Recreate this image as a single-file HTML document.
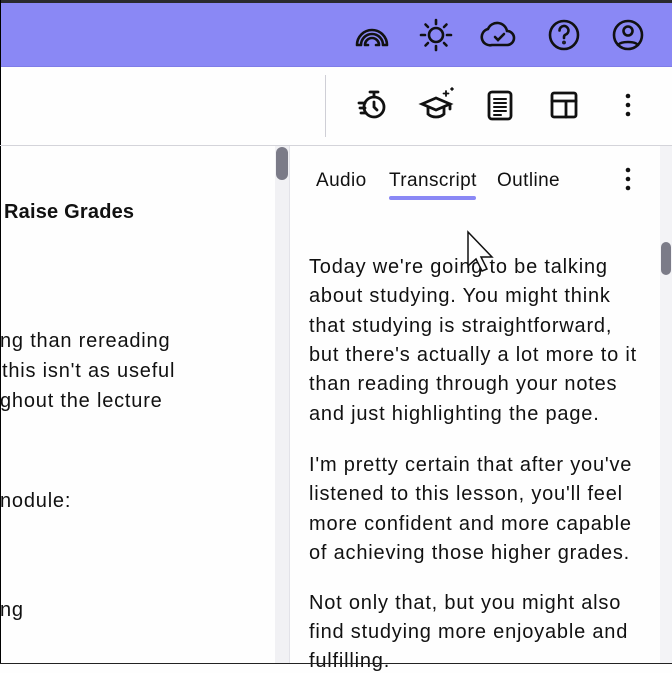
<!DOCTYPE html>
<html><head><style>
*{margin:0;padding:0;box-sizing:border-box}
body{width:672px;height:664px;overflow:hidden;background:#fefefe;position:relative;font-family:"Liberation Sans",sans-serif;color:#111}
.a{position:absolute}
.t{position:absolute;white-space:nowrap;font-size:20px;line-height:24px;letter-spacing:0.8px}
svg{position:absolute;overflow:visible}
</style></head><body>
<div class="a" style="left:0;top:0;width:672px;height:3px;background:#2a2a2e"></div>
<div class="a" style="left:0;top:3px;width:672px;height:64px;background:#8a88f5"></div>
<div class="a" style="left:0;top:66px;width:672px;height:1px;background:#7f7de8"></div>
<div class="a" style="left:0;top:0;width:1px;height:664px;background:#000"></div>
<div class="a" style="left:325px;top:75px;width:1px;height:62px;background:#cfcfd6"></div>
<div class="a" style="left:0;top:145px;width:672px;height:1px;background:#d4d4da"></div>
<div class="a" style="left:275px;top:146px;width:14px;height:517px;background:#f1f1f4"></div>
<div class="a" style="left:276px;top:147px;width:12px;height:33px;border-radius:6px;background:#7b7b88"></div>
<div class="a" style="left:289px;top:146px;width:1px;height:517px;background:#e2e2e8"></div>
<div class="a" style="left:660px;top:146px;width:12px;height:517px;background:#f3f3f6"></div>
<div class="a" style="left:661px;top:242px;width:10px;height:33px;border-radius:5px;background:#7b7b88"></div>

<svg width="672" height="70" style="left:0;top:0" fill="none" stroke="#111" stroke-width="2.6" stroke-linecap="round">
<path d="M357 45a15 15 0 0 1 30 0M361 45a11 11 0 0 1 22 0M365 45a7 7 0 0 1 14 0M357 45h4M383 45h4M365 45h3M376 45h3"/>
<circle cx="436" cy="35" r="7"/>
<path d="M436 20v4M436 46v4M421 35h4M447 35h4M425.5 24.5l2.5 2.5M444 43l2.5 2.5M446.5 24.5l-2.5 2.5M428 43l-2.5 2.5"/>
<path d="M492 45h15a7 7 0 0 0 0-14 10 10 0 0 0-19-2 8 8 0 0 0 4 16z"/>
<path d="M495 37l3 3 6-6"/>
<circle cx="564" cy="35" r="14"/>
<path d="M559.5 30.5a4.5 4.5 0 1 1 6 4.2c-1 .5-1.5 1.3-1.5 2.3v1"/>
<circle cx="564" cy="42.5" r=".6" fill="#111"/>
<circle cx="628" cy="35" r="14"/>
<circle cx="628" cy="31" r="4.5"/>
<path d="M618 45c3-4 17-4 20 0"/>
</svg>
<svg width="672" height="150" style="left:0;top:0" fill="none" stroke="#111" stroke-width="2.8" stroke-linecap="round">
<circle cx="374" cy="107" r="10"/>
<path d="M370 92h8M374 92v5M374 102v5l3 3M359 103h6M360 108h5M361 113h5"/>
<path d="M422 104l14-6 14 6-14 6z"/>
<path d="M428 107v7c4 4 12 4 16 0v-7M450 104v5"/>
<path d="M446 91v5M443.5 93.5h5M452 88v2M451 89h2" stroke-width="1.8"/>
<rect x="489" y="92" width="22" height="27" rx="3"/>
<path d="M494 99h12M494 103h12M494 107h12M494 111h12M494 115h7" stroke-width="2"/>
<rect x="552" y="93" width="24" height="24" rx="2"/>
<path d="M552 101h24M566 101v16"/>
</svg>
<svg width="672" height="300" style="left:0;top:0">
<circle cx="628" cy="96" r="2.3" fill="#111"/><circle cx="628" cy="105" r="2.3" fill="#111"/><circle cx="628" cy="114" r="2.3" fill="#111"/>
<circle cx="628" cy="170" r="2.3" fill="#111"/><circle cx="628" cy="179" r="2.3" fill="#111"/><circle cx="628" cy="188" r="2.3" fill="#111"/>
</svg>

<div class="t" style="left:316px;top:169px;font-size:19px;letter-spacing:0.4px">Audio</div>
<div class="t" style="left:389px;top:169px;font-size:19px;letter-spacing:0.4px">Transcript</div>
<div class="t" style="left:497px;top:169px;font-size:19px;letter-spacing:0.4px">Outline</div>
<div class="a" style="left:389px;top:196px;width:87px;height:4px;border-radius:2px;background:#8a88f5"></div>

<div class="t" style="left:4px;top:200px;font-weight:bold;letter-spacing:0.2px">Raise Grades</div>
<div class="t" style="left:0;top:329px">ng than rereading</div>
<div class="t" style="left:2px;top:359px">this isn't as useful</div>
<div class="t" style="left:0;top:389px">ghout the lecture</div>
<div class="t" style="left:0;top:489px">nodule:</div>
<div class="t" style="left:0;top:598px">ng</div>

<div class="t" style="left:309px;top:255px">Today we're going to be talking</div>
<div class="t" style="left:309px;top:284px">about studying. You might think</div>
<div class="t" style="left:309px;top:314px">that studying is straightforward,</div>
<div class="t" style="left:309px;top:343px">but there's actually a lot more to it</div>
<div class="t" style="left:309px;top:372px">than reading through your notes</div>
<div class="t" style="left:309px;top:402px">and just highlighting the page.</div>
<div class="t" style="left:309px;top:453px">I'm pretty certain that after you've</div>
<div class="t" style="left:309px;top:482px">listened to this lesson, you'll feel</div>
<div class="t" style="left:309px;top:512px">more confident and more capable</div>
<div class="t" style="left:309px;top:541px">of achieving those higher grades.</div>
<div class="t" style="left:309px;top:591px">Not only that, but you might also</div>
<div class="t" style="left:309px;top:620px">find studying more enjoyable and</div>
<div class="t" style="left:309px;top:649px">fulfilling.</div>
<div class="a" style="left:0;top:663px;width:672px;height:1px;background:#222"></div>

<svg width="40" height="60" style="left:466px;top:230px">
<path d="M2 2v34l8-7 6 12 5-2-6-12h11z" fill="#fff" stroke="#111" stroke-width="1.5"/>
</svg>
</body></html>
